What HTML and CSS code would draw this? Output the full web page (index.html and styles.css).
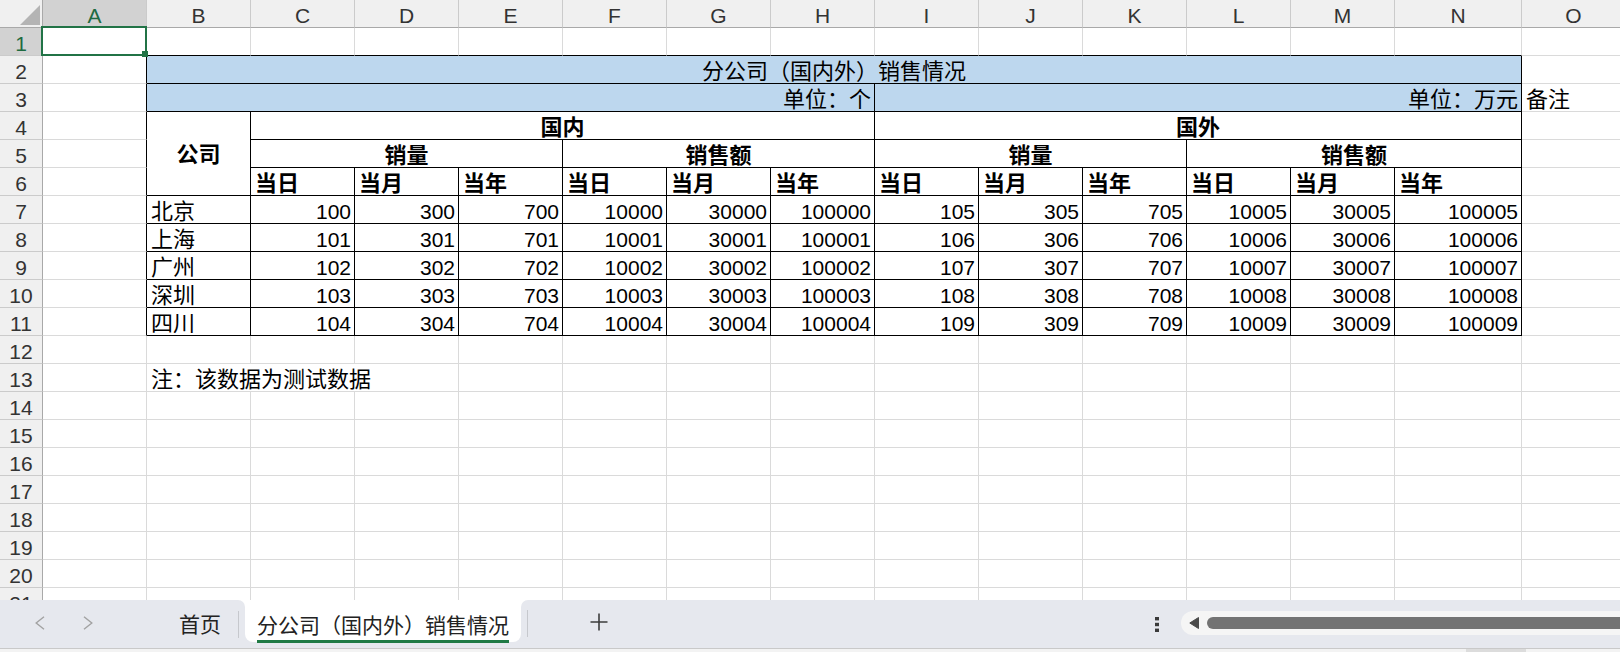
FILE: index.html
```html
<!DOCTYPE html>
<html lang="zh-CN">
<head>
<meta charset="utf-8">
<title>分公司（国内外）销售情况</title>
<link rel="stylesheet" href="styles.css">
</head>
<body>
<div class="app">
  <div class="sheet">
    <div class="grid">
      <div class="corner"><svg width="20" height="20" viewBox="0 0 20 20"><polygon points="20,0 20,20 0,20" fill="#b4b4b4"/></svg></div>
      <div class="h sel">A</div><div class="h">B</div><div class="h">C</div><div class="h">D</div><div class="h">E</div><div class="h">F</div><div class="h">G</div><div class="h">H</div><div class="h">I</div><div class="h">J</div><div class="h">K</div><div class="h">L</div><div class="h">M</div><div class="h">N</div><div class="h">O</div>

      <div class="rh sel">1</div><div class="a1"><div class="selbox"><span class="handle"></span></div></div><div class="bb"></div><div class="bb"></div><div class="bb"></div><div class="bb"></div><div class="bb"></div><div class="bb"></div><div class="bb"></div><div class="bb"></div><div class="bb"></div><div class="bb"></div><div class="bb"></div><div class="bb"></div><div class="bb"></div><div></div>

      <div class="rh">2</div><div class="br"></div><div class="t blue ctr s13">分公司（国内外）销售情况</div><div></div>

      <div class="rh">3</div><div class="br"></div><div class="t blue r s7">单位：个</div><div class="t blue r s6">单位：万元</div><div>备注</div>

      <div class="rh">4</div><div class="br"></div><div class="t b ctr rs3 co">公司</div><div class="t b ctr s6">国内</div><div class="t b ctr s6">国外</div><div></div>

      <div class="rh">5</div><div class="br"></div><div class="t b ctr s3">销量</div><div class="t b ctr s3">销售额</div><div class="t b ctr s3">销量</div><div class="t b ctr s3">销售额</div><div></div>

      <div class="rh">6</div><div class="br"></div><div class="t b">当日</div><div class="t b">当月</div><div class="t b">当年</div><div class="t b">当日</div><div class="t b">当月</div><div class="t b">当年</div><div class="t b">当日</div><div class="t b">当月</div><div class="t b">当年</div><div class="t b">当日</div><div class="t b">当月</div><div class="t b">当年</div><div></div>

      <div class="rh">7</div><div class="br"></div><div class="t">北京</div><div class="t n">100</div><div class="t n">300</div><div class="t n">700</div><div class="t n">10000</div><div class="t n">30000</div><div class="t n">100000</div><div class="t n">105</div><div class="t n">305</div><div class="t n">705</div><div class="t n">10005</div><div class="t n">30005</div><div class="t n">100005</div><div></div>

      <div class="rh">8</div><div class="br"></div><div class="t">上海</div><div class="t n">101</div><div class="t n">301</div><div class="t n">701</div><div class="t n">10001</div><div class="t n">30001</div><div class="t n">100001</div><div class="t n">106</div><div class="t n">306</div><div class="t n">706</div><div class="t n">10006</div><div class="t n">30006</div><div class="t n">100006</div><div></div>

      <div class="rh">9</div><div class="br"></div><div class="t">广州</div><div class="t n">102</div><div class="t n">302</div><div class="t n">702</div><div class="t n">10002</div><div class="t n">30002</div><div class="t n">100002</div><div class="t n">107</div><div class="t n">307</div><div class="t n">707</div><div class="t n">10007</div><div class="t n">30007</div><div class="t n">100007</div><div></div>

      <div class="rh">10</div><div class="br"></div><div class="t">深圳</div><div class="t n">103</div><div class="t n">303</div><div class="t n">703</div><div class="t n">10003</div><div class="t n">30003</div><div class="t n">100003</div><div class="t n">108</div><div class="t n">308</div><div class="t n">708</div><div class="t n">10008</div><div class="t n">30008</div><div class="t n">100008</div><div></div>

      <div class="rh">11</div><div class="br"></div><div class="t">四川</div><div class="t n">104</div><div class="t n">304</div><div class="t n">704</div><div class="t n">10004</div><div class="t n">30004</div><div class="t n">100004</div><div class="t n">109</div><div class="t n">309</div><div class="t n">709</div><div class="t n">10009</div><div class="t n">30009</div><div class="t n">100009</div><div></div>

      <div class="rh">12</div><div></div><div></div><div></div><div></div><div></div><div></div><div></div><div></div><div></div><div></div><div></div><div></div><div></div><div></div><div></div>

      <div class="rh">13</div><div></div><div class="s3">注：该数据为测试数据</div><div></div><div></div><div></div><div></div><div></div><div></div><div></div><div></div><div></div><div></div><div></div>

      <div class="rh">14</div><div></div><div></div><div></div><div></div><div></div><div></div><div></div><div></div><div></div><div></div><div></div><div></div><div></div><div></div><div></div>
      <div class="rh">15</div><div></div><div></div><div></div><div></div><div></div><div></div><div></div><div></div><div></div><div></div><div></div><div></div><div></div><div></div><div></div>
      <div class="rh">16</div><div></div><div></div><div></div><div></div><div></div><div></div><div></div><div></div><div></div><div></div><div></div><div></div><div></div><div></div><div></div>
      <div class="rh">17</div><div></div><div></div><div></div><div></div><div></div><div></div><div></div><div></div><div></div><div></div><div></div><div></div><div></div><div></div><div></div>
      <div class="rh">18</div><div></div><div></div><div></div><div></div><div></div><div></div><div></div><div></div><div></div><div></div><div></div><div></div><div></div><div></div><div></div>
      <div class="rh">19</div><div></div><div></div><div></div><div></div><div></div><div></div><div></div><div></div><div></div><div></div><div></div><div></div><div></div><div></div><div></div>
      <div class="rh">20</div><div></div><div></div><div></div><div></div><div></div><div></div><div></div><div></div><div></div><div></div><div></div><div></div><div></div><div></div><div></div>
      <div class="rh">21</div><div></div><div></div><div></div><div></div><div></div><div></div><div></div><div></div><div></div><div></div><div></div><div></div><div></div><div></div><div></div>
    </div>
  </div>

  <div class="tabbar">
    <div class="seg seg-left">
      <svg class="nav-prev" width="10" height="14" viewBox="0 0 10 14"><polyline points="9,0.8 1.2,7 9,13.2" fill="none" stroke="#a2a2a2" stroke-width="1.4"/></svg>
      <svg class="nav-next" width="10" height="14" viewBox="0 0 10 14"><polyline points="1,0.8 8.8,7 1,13.2" fill="none" stroke="#a2a2a2" stroke-width="1.4"/></svg>
      <span class="tab-home">首页</span>
      <span class="sep sep-a"></span>
    </div>
    <div class="tabwrap">
      <div class="tab-active"><span class="tab-label">分公司（国内外）销售情况</span></div>
    </div>
    <div class="seg seg-right">
      <span class="sep sep-b"></span>
      <svg class="plus" width="18" height="18" viewBox="0 0 18 18"><path d="M9 0.5V17.5M0.5 9H17.5" stroke="#3c3c3c" stroke-width="1.6"/></svg>
      <svg class="more" width="6" height="15" viewBox="0 0 6 15"><rect x="1" y="0" width="4" height="3.4" fill="#3a3a3a"/><rect x="1" y="5.8" width="4" height="3.4" fill="#3a3a3a"/><rect x="1" y="11.6" width="4" height="3.4" fill="#3a3a3a"/></svg>
      <div class="track">
        <svg class="track-arrow" width="10" height="12" viewBox="0 0 10 12"><polygon points="0.8,6 9.5,0.5 9.5,11.5" fill="#4a4a4a" stroke="#4a4a4a" stroke-width="1" stroke-linejoin="round"/></svg>
        <span class="thumb"></span>
      </div>
    </div>
  </div>
  <div class="status"><span class="status-block"></span></div>
</div>
</body>
</html>
```

FILE: styles.css
```css
* { box-sizing: border-box; }
html, body { margin: 0; padding: 0; }
body {
  width: 1620px;
  height: 652px;
  overflow: hidden;
  background: #ffffff;
  font-family: "Liberation Sans", "Noto Sans CJK SC", sans-serif;
  color: #000;
}
.app { display: flex; flex-direction: column; height: 652px; }

/* ---------- sheet ---------- */
.sheet { height: 600px; overflow: hidden; flex: none; }
.grid {
  display: grid;
  grid-template-columns: 43px repeat(13, 104px) 127px 104px;
  grid-auto-rows: 28px;
  width: 1625px;
}
.grid > div {
  border-right: 1px solid #dadada;
  border-bottom: 1px solid #dadada;
  font-size: 22px;
  line-height: 25px;
  padding: 3px 3px 0 4px;
  white-space: nowrap;
}
.grid > .corner {
  background: #f0f0f0;
  border-right-color: #a9a9a9;
  border-bottom-color: #a9a9a9;
  padding: 0 2px 2px 0;
  display: flex;
  justify-content: flex-end;
  align-items: flex-end;
}
.grid > .h {
  background: #f0f0f0;
  border-right-color: #cbcbcb;
  border-bottom-color: #a9a9a9;
  text-align: center;
  font-size: 21px;
  padding: 3px 0 0;
  color: #333;
}
.grid > .rh {
  background: #f0f0f0;
  border-right-color: #a9a9a9;
  border-bottom-color: #cbcbcb;
  text-align: center;
  font-size: 21px;
  padding: 3px 0 0;
  color: #333;
}
.grid > .sel { background: #d2d2d2; color: #1e6b41; }

.grid > .bb { border-bottom-color: #000; }
.grid > .br { border-right-color: #000; }
.grid > .t { border-right-color: #000; border-bottom-color: #000; }
.grid > .blue { background: #bdd7ee; }
.grid > .ctr { text-align: center; padding-left: 0; padding-right: 0; }
.grid > .r { text-align: right; }
.grid > .b { font-weight: 700; }
.grid > .n { text-align: right; font-size: 21px; }
.grid > .co { padding-top: 30px; }

.s3 { grid-column: span 3; }
.s6 { grid-column: span 6; }
.s7 { grid-column: span 7; }
.s13 { grid-column: span 13; }
.rs3 { grid-row: span 3; }

/* selection on A1 */
.a1 { position: relative; }
.selbox {
  position: absolute;
  left: -2px;
  top: -2px;
  right: -1px;
  bottom: -1px;
  border: 2px solid #217346;
  z-index: 2;
}
.handle {
  position: absolute;
  right: -3px;
  bottom: -3px;
  width: 6px;
  height: 6px;
  background: #217346;
}

/* ---------- sheet tabs ---------- */
.tabbar {
  height: 48px;
  flex: none;
  display: flex;
  background: #ffffff;
  font-family: "Noto Sans CJK SC", sans-serif;
  font-size: 21px;
  color: #222;
}
.seg {
  background: #e6e8ee;
  display: flex;
  align-items: flex-start;
}
.seg-left { width: 245px; flex: none; border-top-right-radius: 7px; }
.seg-right { flex: 1; min-width: 0; overflow: hidden; border-top-left-radius: 7px; }

.nav-prev { margin: 16px 0 0 35px; flex: none; }
.nav-next { margin: 16px 0 0 38px; flex: none; }
.tab-home { margin: 13px 0 0 86px; line-height: 21px; flex: none; }
.sep { width: 1px; height: 27px; background: #c6c8cd; flex: none; }
.sep-a { margin: 11px 0 0 17px; }
.sep-b { margin: 10px 0 0 6px; }

.tabwrap { width: 276px; flex: none; background: #e6e8ee; }
.tab-active {
  height: 42px;
  background: #ffffff;
  border-radius: 0 0 8px 8px;
  padding: 9px 0 0 12px;
}
.tab-label {
  display: inline-block;
  line-height: 21px;
  padding-bottom: 5px;
  border-bottom: 3px solid #1f7a45;
}

.plus { margin: 13px 0 0 62px; flex: none; }
.more { margin: 17px 0 0 546px; flex: none; }
.track {
  flex: 1;
  margin: 11px -30px 0 21px;
  height: 24px;
  background: #f5f5f5;
  border-radius: 12px;
  display: flex;
  align-items: center;
  padding-left: 8px;
}
.track-arrow { flex: none; }
.thumb {
  flex: 1;
  margin-left: 8px;
  height: 12px;
  border-radius: 6px;
  background: #737373;
}

.status {
  height: 4px;
  flex: none;
  border-top: 1px solid #c9c9c9;
  background: #f3f3f3;
  display: flex;
}
.status-block { margin-left: 1466px; width: 60px; background: #dcdcdc; }
```
